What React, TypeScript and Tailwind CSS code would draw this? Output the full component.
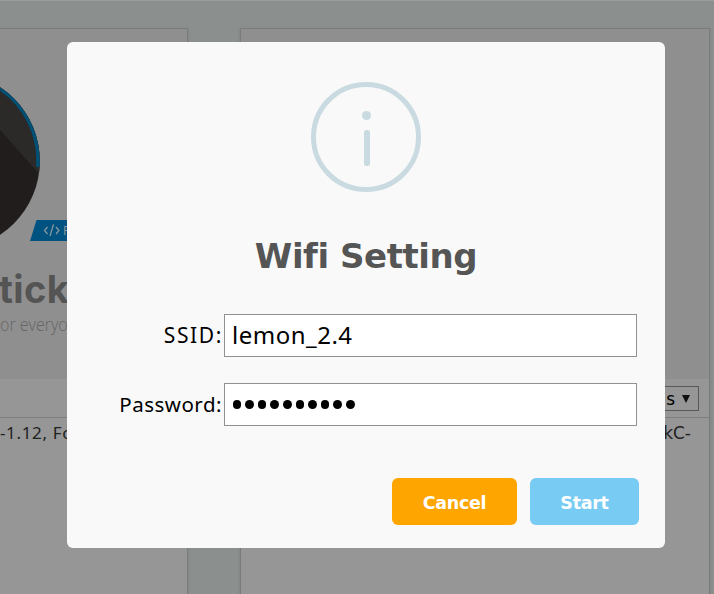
import React from "react";

function Logo() {
  return (
    <svg className="absolute top-[51px] left-0" width="70" height="170" viewBox="0 80 70 170">
      <clipPath id="disc"><circle cx="-48.5" cy="161" r="88.3" /></clipPath>
      <g clipPath="url(#disc)">
        <rect y="80" width="50" height="170" fill="#201d1c" />
        <path d="M0 130L40 175V80H0Z" fill="#2c2a29" />
        <path d="M0 88.5A86.6 86.6 0 0 1 37.9 167" fill="none" stroke="#004f74" strokeWidth="3.8" />
      </g>
      <path d="M36.5 220H70V241H30Z" fill="#005280" />
      <path d="M47.5 227L44.5 230.5L47.5 234M56 227L59 230.5L56 234M53.5 224.5L50 236" fill="none" stroke="#8d9aa3" strokeWidth="1.2" />
      <text x="63" y="235" fontSize="12" fill="#8d9aa3" fontFamily="Open Sans, sans-serif">F</text>
    </svg>
  );
}

function Backdrop() {
  return (
    <div className="flex h-[600px] border-t border-[#999c9a] bg-[#8b8f8d] pt-[27px] font-['DejaVu_Sans',sans-serif] text-[#222]">
      <section className="relative h-full w-[188px] shrink-0 border-t border-r border-[#7a7b7b] bg-[#969696] shadow-sm">
        <div className="h-[350px] bg-[#8f8f8f]">
          <Logo />
          <div className="absolute top-[235px] -left-[1px] font-['Inter',sans-serif] text-[38px] leading-[50px] font-bold tracking-[0.4px] whitespace-nowrap text-[#545454]">tick</div>
          <div className="absolute top-[282px] left-0 origin-left scale-x-[0.89] font-['Open_Sans',sans-serif] text-[18px] leading-[26px] font-light whitespace-nowrap text-[#666]">or everyone</div>
        </div>
        <div className="h-[39px] border-b border-[#7d7d7d]" />
        <p className="pt-[4px] font-['Noto_Sans',sans-serif] text-[17px] leading-[22px] tracking-[0.65px] whitespace-nowrap">-1.12, For</p>
      </section>
      <section className="ml-[52px] h-full w-[470px] shrink-0 border border-[#7a7b7b] bg-[#969696] shadow-sm">
        <div className="h-[350px] bg-[#8f8f8f]" />
        <div className="flex h-[39px] items-start justify-end border-b border-[#7d7d7d] pt-[7px] pr-[10px]">
          <div className="flex h-[25px] w-[120px] items-center justify-end border border-[#595959] pr-[8px] text-[17px] text-black">
            <span className="pt-[3px]">s</span>
            <svg className="ml-[7px]" width="8" height="8"><path d="M0 0H8L4 8Z" fill="#111" /></svg>
          </div>
        </div>
        <p className="pt-[4px] pr-[18px] text-right text-[17px] leading-[22px]">M5StickC-</p>
      </section>
    </div>
  );
}

export default function App() {
  return (
    <main className="relative h-[594px] w-[714px] overflow-hidden">
      <Backdrop />
      <div role="dialog" className="absolute top-[42px] left-[67px] flex h-[506px] w-[598px] flex-col rounded-[6px] bg-[#f9f9f9] pt-[40px] font-['Noto_Sans',sans-serif]">
        <svg className="ml-[244px] shrink-0" width="110" height="110">
          <circle cx="55" cy="55" r="52.5" fill="none" stroke="#c9dae1" strokeWidth="5" />
          <circle cx="55.5" cy="33.5" r="4.5" fill="#c9dae1" />
          <rect x="53" y="48" width="6" height="36" rx="2.5" fill="#c9dae1" />
        </svg>
        <h1 className="mt-[42px] h-[44px] text-center font-['DejaVu_Sans',sans-serif] text-[34px] leading-[44px] font-bold tracking-[-0.45px] text-[#555]">Wifi Setting</h1>
        <form className="mt-[36px] flex flex-col gap-[26px] text-black">
          <label className="flex h-[43px] items-center">
            <span className="w-[156px] text-right text-[21px] tracking-[1.6px]">SSID:</span>
            <input readOnly value="lemon_2.4" className="ml-[1px] h-[43px] w-[413px] border border-[#919191] bg-white px-[7px] pb-[2px] text-[24px] tracking-[0.5px]" />
          </label>
          <label className="flex h-[43px] items-center">
            <span className="w-[155px] text-right text-[20.5px] tracking-[0.5px]">Password:</span>
            <span className="ml-[2px] flex h-[43px] w-[413px] items-center gap-[4px] border border-[#919191] bg-white pl-[8px]">
              {Array.from({ length: 10 }, (_, i) => <i key={i} className="mr-[0.3px] size-[8.6px] -ml-[0.3px] rounded-full bg-black" />)}
            </span>
          </label>
        </form>
        <div className="mt-[52px] flex justify-end gap-[13px] pr-[26px] font-['DejaVu_Sans',sans-serif] text-[17.5px] font-bold tracking-[-0.3px] text-white">
          <button className="h-[47px] w-[125px] rounded-[6px] bg-[#ffa500] pt-[3px]">Cancel</button>
          <button className="h-[47px] w-[109px] rounded-[6px] bg-[#78cbf2] pt-[3px]">Start</button>
        </div>
      </div>
    </main>
  );
}
